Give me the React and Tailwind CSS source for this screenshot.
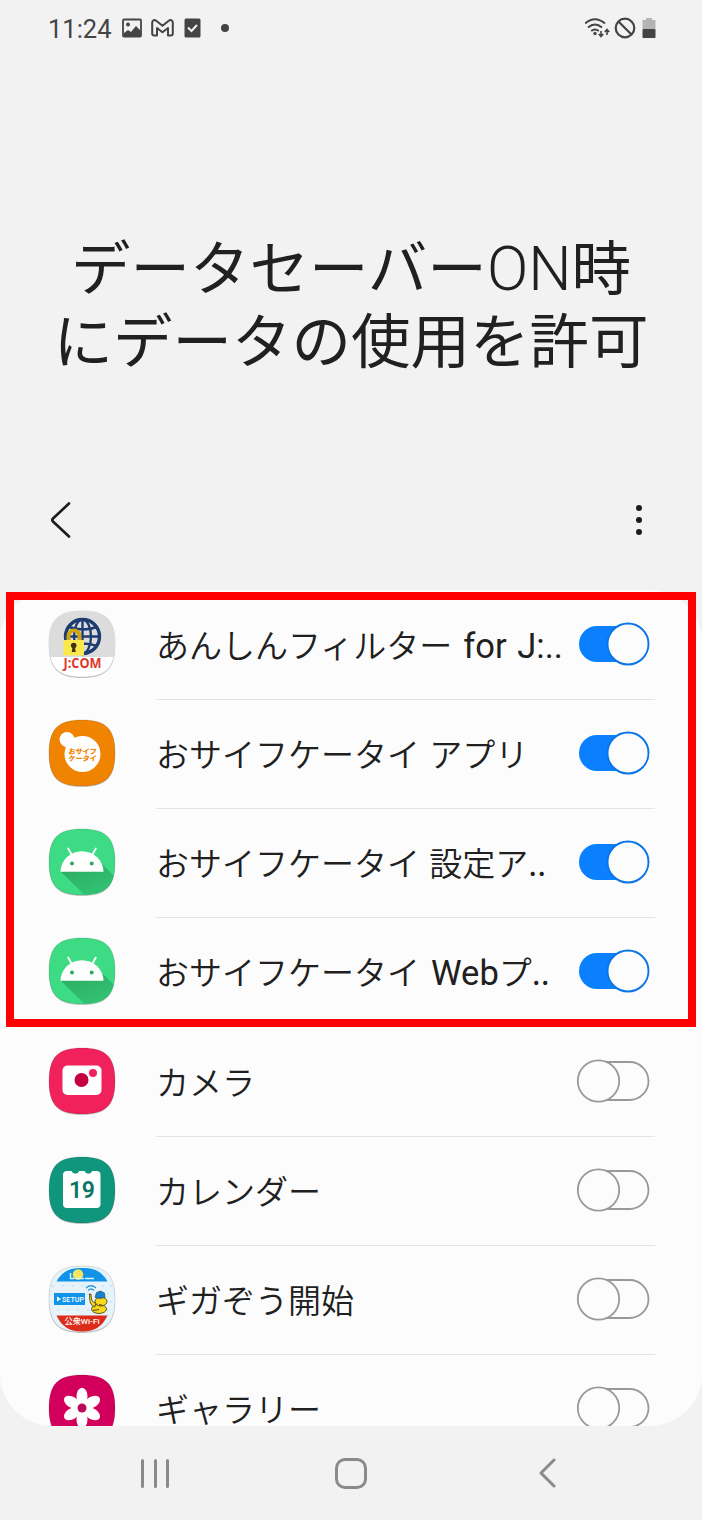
import React, { useState } from 'react';

const SQUIRCLE = 'M33 0C57 0 66 9 66 33S57 66 33 66 0 57 0 33 9 0 33 0Z';

function IconShell({ id, fill, children }) {
    return (
        <svg viewBox="-1 -1 68 69" className="w-[68px] h-[69px] shrink-0">
            <defs>
                <clipPath id={id}><path d={SQUIRCLE} /></clipPath>
            </defs>
            <path d={SQUIRCLE} fill="#000" opacity="0.18" transform="translate(0 1)" />
            <path d={SQUIRCLE} fill={fill} stroke="#000" strokeOpacity="0.12" />
            <g clipPath={`url(#${id})`}>{children}</g>
        </svg>
    );
}

function FilterIcon() {
    return (
        <IconShell id="filter" fill="#fff">
            <rect width="66" height="46" fill="#dcdcdc" />
            <g fill="none" stroke="#1d3d70" strokeWidth="2.4">
                <circle cx="33.5" cy="25.5" r="17" strokeWidth="3.4" />
                <ellipse cx="33.5" cy="25.5" rx="8.5" ry="17" />
                <path d="M33.5 9v35M17 25.500h34M20 16q14 5 28 0M20 35q14-5 28 0" />
            </g>
            <path d="M19.500 30v-5a5.500 5.500 0 0 1 11 0v5" fill="none" stroke="#d2a50c" strokeWidth="4" />
            <rect x="14.500" y="29" width="20.500" height="15.500" fill="#fbe84b" />
            <circle cx="24.700" cy="34.500" r="2.800" fill="#40350e" />
            <path d="M23.700 35h2l1 6h-4z" fill="#40350e" />
            <text x="33.500" y="56.500" textAnchor="middle" textLength="38" lengthAdjust="spacingAndGlyphs" fontSize="13.500" fontWeight="700" fill="#e0382a" className="font-['Open_Sans',sans-serif]">J:COM</text>
        </IconShell>
    );
}

function WalletIcon() {
    return (
        <IconShell id="wallet" fill="#f08300">
            <circle cx="18" cy="19.500" r="7.500" fill="#fff" />
            <path d="M16 26l6 3 4-10-3-4z" fill="#fff" />
            <circle cx="33.500" cy="34" r="18" fill="#fff" />
            <g fill="#f08300" fontSize="7" fontWeight="900" className="font-['Noto_Sans_CJK_JP',sans-serif]" transform="skewX(-8)">
                <text x="24" y="34" textLength="28" lengthAdjust="spacingAndGlyphs">おサイフ</text>
                <text x="25" y="41.500" textLength="28" lengthAdjust="spacingAndGlyphs">ケータイ</text>
            </g>
        </IconShell>
    );
}

function AndroidIcon({ id }) {
    return (
        <IconShell id={id} fill="#3ddc84">
            <defs>
                <linearGradient id={`${id}-shade`} x1="0" y1="0" x2="0.6" y2="1">
                    <stop offset="0" stopColor="#2aab63" />
                    <stop offset="1" stopColor="#36cc79" />
                </linearGradient>
            </defs>
            <path d="M12 43L54 36L80 62V80H50Z" fill={`url(#${id}-shade)`} />
            <path d="M11.500 42.800a21.500 20.500 0 0 1 43 0z" fill="#fff" />
            <path d="M22.500 25.500l-3.300-6M43.500 25.500l3.300-6" stroke="#fff" strokeWidth="1.800" strokeLinecap="round" />
            <circle cx="23" cy="34.500" r="2" fill="#31a866" />
            <circle cx="42.700" cy="34.500" r="2" fill="#31a866" />
        </IconShell>
    );
}

function CameraIcon() {
    return (
        <IconShell id="camera" fill="#f1215b">
            <rect x="13.500" y="17.500" width="39" height="29.500" rx="5" fill="#fff" />
            <circle cx="32.500" cy="32" r="7" fill="#c4003f" />
            <circle cx="44" cy="25" r="4" fill="#f1215b" />
        </IconShell>
    );
}

function CalendarIcon() {
    return (
        <IconShell id="calendar" fill="#10967c">
            <path d="M18 14h4.500a4.200 4.200 0 0 0 7.800 0h5.200a4.200 4.200 0 0 0 7.800 0h4.200a4 4 0 0 1 4 4v29a4 4 0 0 1-4 4h-29.500a4 4 0 0 1-4-4v-29a4 4 0 0 1 4-4z" fill="#fff" />
            <text x="33" y="41" textAnchor="middle" textLength="26" fontSize="23" fontWeight="600" fill="#0c7565" className="font-['Roboto',sans-serif]">19</text>
        </IconShell>
    );
}

function GigazoIcon() {
    return (
        <IconShell id="gigazo" fill="#e7f3fa">
            <g fill="#cfe7f4">
                {[20, 28, 36, 44].map(y => [4, 14, 24, 34, 44, 54, 62].map(x => (
                    <circle key={`${x}-${y}`} cx={x + (y % 16 === 4 ? 0 : 5)} cy={y} r="1.2" />
                )))}
            </g>
            <path d="M7.500 15.500Q15 1 33 2Q51 1 58.500 15.500Z" fill="#1193e8" />
            <circle cx="29" cy="8.500" r="5.200" fill="#f4e75c" />
            <path d="M21.500 7v5.500h4M27 12.500h8M36 12.500h9" stroke="#d9f2f5" strokeWidth="1.500" fill="none" />
            <rect x="5" y="27" width="31" height="12" fill="#1193e8" />
            <path d="M8 30.500l4 2.500-4 2.500z" fill="#fff" />
            <text x="13" y="35.500" textLength="22" lengthAdjust="spacingAndGlyphs" fontSize="7" fontWeight="500" fill="#fff" className="font-['Roboto',sans-serif]">SETUP</text>
            <path d="M37 22q5-4.500 10 0M39 24.500q3-3 6 0" fill="none" stroke="#3299d6" strokeWidth="1.300" />
            {/* Elephant mascot with a raised trunk */}
            <g fill="#f7d81c" stroke="#3a3412" strokeWidth="0.800">
                <ellipse cx="50" cy="43" rx="7.500" ry="4.500" />
                <ellipse cx="52" cy="35.500" rx="6" ry="4.500" />
                <path d="M47 37q-5 0-5-9h-1.500q-.500 11 5 13z" />
            </g>
            <path d="M46 31.500l1.500-5 4-1.500 4 2 .500 4.500-5 1z" fill="#1683cf" stroke="#24404e" strokeWidth="0.600" />
            <path d="M44 44.500l6-1M50 38.500l4 1" fill="none" stroke="#3b361e" strokeWidth="0.900" />
            <path d="M7.500 49.500H58.500Q51 66 33 65.500Q15 66 7.500 49.500Z" fill="#dc2d1b" />
            <text x="33" y="58" textAnchor="middle" textLength="35" lengthAdjust="spacingAndGlyphs" fontSize="8" fontWeight="500" fill="#fff" className="font-['Roboto','Noto_Sans_CJK_JP',sans-serif]">公衆Wi-Fi</text>
        </IconShell>
    );
}

function GalleryIcon() {
    return (
        <IconShell id="gallery" fill="#d2005c">
            {[0, 60, 120, 180, 240, 300].map(a => (
                <ellipse key={a} cx="33" cy="21.500" rx="5.500" ry="8.800" fill="#fff" transform={`rotate(${a} 33 33)`} />
            ))}
            <circle cx="33" cy="33" r="6" fill="#fff" />
            <circle cx="33" cy="33" r="4.500" fill="#b90b59" />
        </IconShell>
    );
}

const APPS = [
    { name: 'あんしんフィルター', latin: 'for J:..', icon: <FilterIcon />, on: true },
    { name: 'おサイフケータイ アプリ', icon: <WalletIcon />, on: true },
    { name: 'おサイフケータイ 設定ア..', icon: <AndroidIcon id="settings" />, on: true },
    { name: 'おサイフケータイ', latin: 'Web', rest: 'プ..', icon: <AndroidIcon id="web" />, on: true },
    { name: 'カメラ', icon: <CameraIcon />, on: false },
    { name: 'カレンダー', icon: <CalendarIcon />, on: false },
    { name: 'ギガぞう開始', icon: <GigazoIcon />, on: false },
    { name: 'ギャラリー', icon: <GalleryIcon />, on: false },
];

function Toggle({ on, onClick }) {
    return (
        <button onClick={onClick} className="w-[74px] h-[44px] shrink-0">
            <svg viewBox="0 0 74 44" className="w-[74px] h-[44px]">
                {on ? (
                    <>
                        <rect x="3" y="4" width="68" height="36" rx="18" fill="#0a80ff" />
                        <circle cx="52" cy="22" r="20.500" fill="#fcfcfc" stroke="#0a75e6" strokeWidth="1.900" />
                    </>
                ) : (
                    <>
                        <rect x="10" y="3" width="62.500" height="38" rx="19" fill="#fcfcfc" stroke="#999" strokeWidth="1.800" />
                        <circle cx="22.500" cy="22" r="20.700" fill="#fcfcfc" stroke="#999" strokeWidth="1.800" />
                    </>
                )}
            </svg>
        </button>
    );
}

function StatusBar() {
    return (
        <div className="h-[56px] pl-[48px] pr-[46px] flex items-center justify-between text-[#444]">
            <div className="flex items-center">
                <span className="w-[74px] pt-[3px] text-[25.500px] leading-none font-['Roboto',sans-serif]">11:24</span>
                {/* Picture, mail and task notifications */}
                <svg viewBox="0 0 20 20" className="w-[20px] h-[20px]">
                    <rect x="1" y="1.500" width="18" height="17" rx="1" fill="none" stroke="currentColor" strokeWidth="1.800" />
                    <circle cx="6" cy="6.500" r="2" fill="currentColor" />
                    <path d="M2 15l4-3 3 2 5-6 5 5v5H2z" fill="currentColor" />
                </svg>
                <svg viewBox="0 0 23 18" className="w-[23px] h-[18px] ml-[9px]">
                    <path d="M1.200 3.500C1.200 1 3.800.500 5.200 1.700L11.500 6.800 17.800 1.700C19.200.500 21.800 1 21.800 3.500V14.500a2 2 0 0 1-2 2H17V9L11.500 13.200 6 9v7.500H3.200a2 2 0 0 1-2-2z" fill="none" stroke="currentColor" strokeWidth="2" strokeLinejoin="round" />
                </svg>
                <svg viewBox="0 0 17 20" className="w-[17px] h-[20px] ml-[10px]">
                    <rect x="0.500" y="0.500" width="16" height="19" rx="1.500" fill="currentColor" />
                    <path d="M4 9.500l3.500 3.500 5.500-6" fill="none" stroke="#f2f2f2" strokeWidth="2" />
                </svg>
                <div className="size-2 rounded-full bg-[#444] ml-[20px]" />
            </div>
            <div className="flex items-center">
                <svg viewBox="0 0 26 22" className="w-[26px] h-[22px]">
                    <g fill="none" stroke="currentColor" strokeWidth="2">
                        <path d="M0 6.500Q10 -2 20 6.500" />
                        <path d="M3 10.500Q10 4.500 17 10.500" />
                        <path d="M6.200 14Q10 11 13.800 14" />
                        <path d="M16 14v5M13.800 17l2.200 2.500 2.200-2.500M22 18v-5M19.800 15l2.200-2.500 2.200 2.500" strokeWidth="1.600" />
                    </g>
                    <circle cx="10" cy="16.500" r="1.700" fill="currentColor" />
                </svg>
                <svg viewBox="0 0 22 22" className="w-[22px] h-[22px] ml-[3px]">
                    <g fill="none" stroke="currentColor" strokeWidth="2.200">
                        <circle cx="11" cy="11" r="9.300" />
                        <path d="M4.500 4.500l13 13" />
                    </g>
                </svg>
                <svg viewBox="0 0 14 20" className="w-[14px] h-[20px] ml-[6px]">
                    <path d="M4 0h6v2h3.500v9H.500V2H4z" fill="#b4b4b4" />
                    <rect x="0.500" y="11" width="13" height="9" rx="0.700" fill="currentColor" />
                </svg>
            </div>
        </div>
    );
}

export default function App() {
    const [apps, setApps] = useState(APPS);

    const toggleApp = (index) => {
        setApps(apps.map((app, i) => (i === index ? { ...app, on: !app.on } : app)));
    };

    return (
        <div className="relative w-[702px] h-[1520px] bg-[#f2f2f2] text-[#202020] flex flex-col overflow-hidden">
            <StatusBar />

            {/* Expanded header */}
            <h1 className="h-[394px] pt-[172px] text-center text-[59.500px] leading-[73px] font-normal font-['Noto_Sans_CJK_JP',sans-serif]">
                データセーバー<span className="text-[61px] leading-none font-light font-['Roboto',sans-serif]">ON</span>時<br />にデータの使用を許可
            </h1>

            <div className="h-[140px] pl-[50px] pr-[60px] flex items-center justify-between">
                <svg viewBox="0 0 22 38" className="w-[22px] h-[38px]">
                    <path d="M19 2.500L3 17.500Q1.500 19 3 20.500L19 35.500" fill="none" stroke="#1b1b1b" strokeWidth="2.600" strokeLinecap="round" />
                </svg>
                <div className="flex flex-col gap-[6px]">
                    <div className="size-[6px] rounded-full bg-[#1b1b1b]" />
                    <div className="size-[6px] rounded-full bg-[#1b1b1b]" />
                    <div className="size-[6px] rounded-full bg-[#1b1b1b]" />
                </div>
            </div>

            {/* App list */}
            <div className="h-[836px] shrink-0 rounded-[52px] bg-[#fcfcfc] overflow-hidden">
                {apps.map((app, i) => (
                    <div key={i} className="h-[109.150px] pl-[48px] pr-[47px] flex">
                        <div className="w-[108px] pt-[20px] shrink-0">{app.icon}</div>
                        <div className="flex-1">
                            <div className={`h-[110px] flex justify-between border-b ${i === apps.length - 1 ? 'border-transparent' : 'border-[#e4e4e4]'}`}>
                                <span className="pt-[29px] text-[33px] leading-[50px] [word-spacing:2px] whitespace-nowrap font-[350] font-['Noto_Sans_CJK_JP',sans-serif]">
                                    {app.name}
                                    {app.latin && <span className="ml-[11px] text-[34.500px] leading-none font-normal font-['Roboto',sans-serif]">{app.latin}</span>}
                                    {app.rest}
                                </span>
                                <div className="w-[79px] shrink-0 pt-[32px]">
                                    <Toggle on={app.on} onClick={() => toggleApp(i)} />
                                </div>
                            </div>
                        </div>
                    </div>
                ))}
            </div>

            {/* Navigation bar */}
            <div className="flex-1 pl-[141px] pr-[146px] flex items-center">
                <div className="flex gap-[9.500px]">
                    <div className="w-[3px] h-[29px] rounded-full bg-[#8a8a8a]" />
                    <div className="w-[3px] h-[29px] rounded-full bg-[#8a8a8a]" />
                    <div className="w-[3px] h-[29px] rounded-full bg-[#8a8a8a]" />
                </div>
                <div className="w-[32px] h-[31px] ml-[166px] border-[3.500px] border-[#8a8a8a] rounded-[10px]" />
                <svg viewBox="0 0 18 30" className="w-[18px] h-[30px] ml-auto">
                    <path d="M16 2L3 15l13 13" fill="none" stroke="#8a8a8a" strokeWidth="3" strokeLinecap="round" strokeLinejoin="round" />
                </svg>
            </div>

            {/* Highlight around the allowed apps */}
            <div className="absolute left-[6px] top-[592px] w-[690px] h-[435px] border-8 border-[#ff0000] pointer-events-none" />
        </div>
    );
}
